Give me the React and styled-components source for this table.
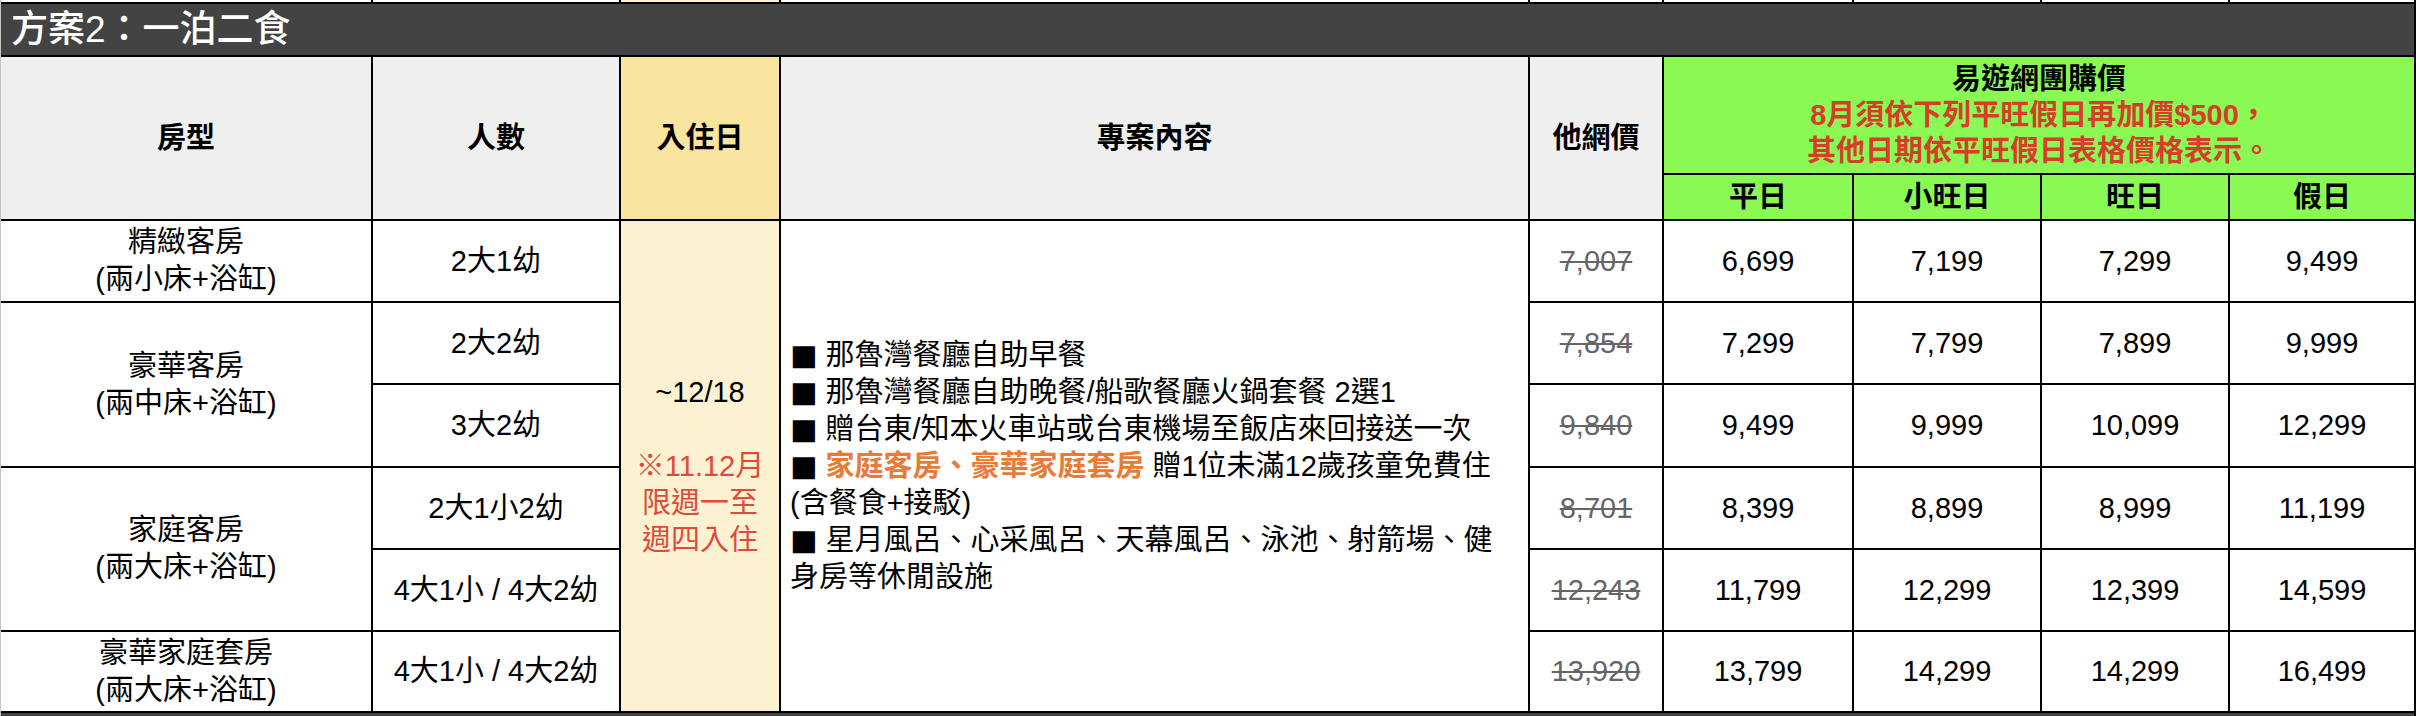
import React from "react";
import styled, { createGlobalStyle } from "styled-components";

const GlobalStyle = createGlobalStyle`
  html, body { margin: 0; padding: 0; background: #ffffff; }
  body {
    font-family: "Liberation Sans", "Noto Sans CJK TC", "Noto Sans", sans-serif;
    -webkit-font-smoothing: antialiased;
  }
`;

const Sheet = styled.div`
  display: grid;
  width: fit-content;
  grid-template-columns: 370px 246px 158px 747px 132px 188px 186px 186px 184px;
  grid-template-rows: 2px 51px 116px 44px 80px 80px 81px 80px 80px 79px 3px;
  gap: 2px;
  background: #000000;
  border-left: 1px solid #c4c4c4;
  padding-right: 2px;
`;

const Cell = styled.div`
  grid-column: ${(p) => p.$col};
  grid-row: ${(p) => p.$row};
  display: flex;
  align-items: center;
  justify-content: center;
  text-align: center;
  background: ${(p) => p.$bg || "#ffffff"};
  color: #000000;
  font-size: 29px;
  line-height: 37px;
  white-space: nowrap;
  overflow: hidden;
`;

const StripCell = styled.div`
  background: ${(p) => p.$bg || "#ffffff"};
`;

const TitleBar = styled.div`
  grid-column: 1 / -1;
  grid-row: ${(p) => p.$row};
  background: #434343;
  color: #ffffff;
  font-size: 37px;
  font-weight: 500;
  line-height: 51px;
  padding-left: 10px;
  display: flex;
  align-items: center;
`;

const HeadCell = styled(Cell)`
  font-weight: 700;
`;

const GreenHead = styled(Cell)`
  background: #89fa53;
  font-weight: 700;
  line-height: 36px;
  flex-direction: column;
`;

const RedLine = styled.span`
  color: #d63e2b;
`;

const DateCell = styled(Cell)`
  flex-direction: column;
  background: #fcf2d1;
`;

const DateNote = styled.span`
  color: #de4b3b;
`;

const ContentCell = styled(Cell)`
  justify-content: flex-start;
  text-align: left;
  padding: 0 9px;
`;

const Bullet = styled.span`
  font-family: "DejaVu Sans", sans-serif;
  margin-right: 8px;
`;

const Highlight = styled.span`
  color: #e67c37;
  font-weight: 700;
`;

const OldPrice = styled.span`
  color: #666666;
  text-decoration: line-through;
  text-decoration-color: #666666;
`;

const stripColors = ["#fff", "#fff", "#fcf2d1", "#fff", "#fff", "#fff", "#fff", "#fff", "#fff"];

const rooms = [
  { name: "精緻客房", bed: "(兩小床+浴缸)", row: "5 / 6" },
  { name: "豪華客房", bed: "(兩中床+浴缸)", row: "6 / 8" },
  { name: "家庭客房", bed: "(兩大床+浴缸)", row: "8 / 10" },
  { name: "豪華家庭套房", bed: "(兩大床+浴缸)", row: "10 / 11" },
];

const rows = [
  { people: "2大1幼", other: "7,007", prices: ["6,699", "7,199", "7,299", "9,499"] },
  { people: "2大2幼", other: "7,854", prices: ["7,299", "7,799", "7,899", "9,999"] },
  { people: "3大2幼", other: "9,840", prices: ["9,499", "9,999", "10,099", "12,299"] },
  { people: "2大1小2幼", other: "8,701", prices: ["8,399", "8,899", "8,999", "11,199"] },
  { people: "4大1小 / 4大2幼", other: "12,243", prices: ["11,799", "12,299", "12,399", "14,599"] },
  { people: "4大1小 / 4大2幼", other: "13,920", prices: ["13,799", "14,299", "14,299", "16,499"] },
];

const dayTypes = ["平日", "小旺日", "旺日", "假日"];

export default function App() {
  return (
    <>
      <GlobalStyle />
      <Sheet>
        {stripColors.map((c, i) => (
          <StripCell key={i} $bg={c} />
        ))}

        <TitleBar $row="2 / 3">方案2：一泊二食</TitleBar>

        <HeadCell $col="1 / 2" $row="3 / 5" $bg="#efefef">房型</HeadCell>
        <HeadCell $col="2 / 3" $row="3 / 5" $bg="#efefef">人數</HeadCell>
        <HeadCell $col="3 / 4" $row="3 / 5" $bg="#f9e5a0">入住日</HeadCell>
        <HeadCell $col="4 / 5" $row="3 / 5" $bg="#efefef">專案內容</HeadCell>
        <HeadCell $col="5 / 6" $row="3 / 5" $bg="#efefef">他網價</HeadCell>
        <GreenHead $col="6 / 10" $row="3 / 4">
          <span>易遊網團購價</span>
          <RedLine>8月須依下列平旺假日再加價$500，</RedLine>
          <RedLine>其他日期依平旺假日表格價格表示。</RedLine>
        </GreenHead>
        {dayTypes.map((d, i) => (
          <HeadCell key={d} $col={`${6 + i} / ${7 + i}`} $row="4 / 5" $bg="#89fa53">
            {d}
          </HeadCell>
        ))}

        {rooms.map((r) => (
          <Cell key={r.name} $col="1 / 2" $row={r.row}>
            {r.name}
            <br />
            {r.bed}
          </Cell>
        ))}

        <DateCell $col="3 / 4" $row="5 / 11">
          <span>~12/18</span>
          <span>&nbsp;</span>
          <DateNote>※11.12月</DateNote>
          <DateNote>限週一至</DateNote>
          <DateNote>週四入住</DateNote>
        </DateCell>

        <ContentCell $col="4 / 5" $row="5 / 11">
          <div>
            <Bullet>■</Bullet>那魯灣餐廳自助早餐
            <br />
            <Bullet>■</Bullet>那魯灣餐廳自助晚餐/船歌餐廳火鍋套餐 2選1
            <br />
            <Bullet>■</Bullet>贈台東/知本火車站或台東機場至飯店來回接送一次
            <br />
            <Bullet>■</Bullet>
            <Highlight>家庭客房、豪華家庭套房</Highlight> 贈1位未滿12歲孩童免費住
            <br />
            (含餐食+接駁)
            <br />
            <Bullet>■</Bullet>星月風呂、心采風呂、天幕風呂、泳池、射箭場、健
            <br />
            身房等休閒設施
          </div>
        </ContentCell>

        {rows.map((r, i) => {
          const row = `${5 + i} / ${6 + i}`;
          return (
            <React.Fragment key={i}>
              <Cell $col="2 / 3" $row={row}>{r.people}</Cell>
              <Cell $col="5 / 6" $row={row}>
                <OldPrice>{r.other}</OldPrice>
              </Cell>
              {r.prices.map((p, j) => (
                <Cell key={j} $col={`${6 + j} / ${7 + j}`} $row={row}>
                  {p}
                </Cell>
              ))}
            </React.Fragment>
          );
        })}

        <TitleBar $row="11 / 12" />
      </Sheet>
    </>
  );
}
